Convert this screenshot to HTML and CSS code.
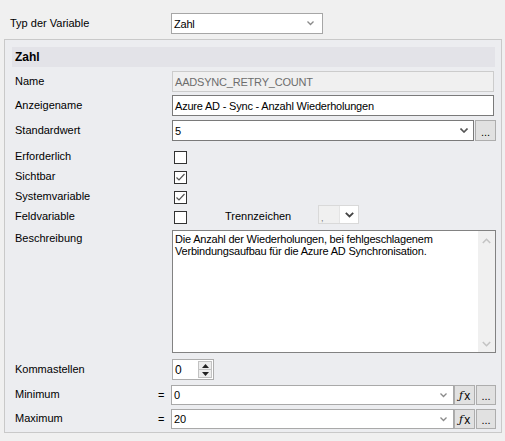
FILE: index.html
```html
<!DOCTYPE html>
<html>
<head>
<meta charset="utf-8">
<link rel="stylesheet" href="styles.css">
</head>
<body>
<div class="top">
  <span class="top-lbl">Typ der Variable</span>
  <div class="combo top-combo">
    <span class="val">Zahl</span>
    <svg class="chev" width="7" height="5" viewBox="0 0 7 5"><polyline points="0.5,0.5 3.5,3.5 6.5,0.5" fill="none" stroke="#8a8a8a" stroke-width="1.3"/></svg>
  </div>
</div>
<div class="group">
  <div class="band">Zahl</div>

  <div class="row h21 mt4">
    <span class="lbl">Name</span>
    <div class="field disabled">AADSYNC_RETRY_COUNT</div>
  </div>

  <div class="row h21 mt3">
    <span class="lbl">Anzeigename</span>
    <div class="field">Azure AD - Sync - Anzahl Wiederholungen</div>
  </div>

  <div class="row h21 mt4">
    <span class="lbl">Standardwert</span>
    <div class="combo std-combo">
      <span class="val">5</span>
      <svg class="chev" width="8" height="5" viewBox="0 0 8 5"><polyline points="0.5,0.5 4,4 7.5,0.5" fill="none" stroke="#555" stroke-width="1.6"/></svg>
    </div>
    <div class="btn dots">...</div>
  </div>

  <div class="row h20 mt6">
    <span class="lbl">Erforderlich</span>
    <span class="cb"></span>
  </div>
  <div class="row h20">
    <span class="lbl">Sichtbar</span>
    <span class="cb"><svg width="11" height="11" viewBox="0 0 11 11"><polyline points="1.5,5.5 4,8 9.5,2" fill="none" stroke="#555" stroke-width="1.2"/></svg></span>
  </div>
  <div class="row h20">
    <span class="lbl">Systemvariable</span>
    <span class="cb"><svg width="11" height="11" viewBox="0 0 11 11"><polyline points="1.5,5.5 4,8 9.5,2" fill="none" stroke="#555" stroke-width="1.2"/></svg></span>
  </div>
  <div class="row h20">
    <span class="lbl">Feldvariable</span>
    <span class="cb"></span>
    <span class="sep-lbl">Trennzeichen</span>
    <div class="sep-combo">
      <span class="sep-val">,</span>
      <span class="sep-btn"><svg width="9" height="6" viewBox="0 0 9 6"><polyline points="0.8,0.8 4.5,4.5 8.2,0.8" fill="none" stroke="#444" stroke-width="1.8"/></svg></span>
    </div>
  </div>

  <div class="row desc mt3">
    <span class="lbl lbl-top-al">Beschreibung</span>
    <div class="textarea">
      <div class="ta-text">Die Anzahl der Wiederholungen, bei fehlgeschlagenem Verbindungsaufbau für die Azure AD Synchronisation.</div>
      <div class="vscroll">
        <svg width="9" height="6" viewBox="0 0 9 6"><polyline points="0.8,5 4.5,1.3 8.2,5" fill="none" stroke="#c4c4c4" stroke-width="1.6"/></svg>
        <svg width="9" height="6" viewBox="0 0 9 6"><polyline points="0.8,1 4.5,4.7 8.2,1" fill="none" stroke="#c4c4c4" stroke-width="1.6"/></svg>
      </div>
    </div>
  </div>

  <div class="row h21 mt6">
    <span class="lbl">Kommastellen</span>
    <div class="spin">
      <span class="spin-val">0</span>
      <div class="spin-btns">
        <span class="sb"><svg width="7" height="4" viewBox="0 0 7 4"><polygon points="0,4 3.5,0 7,4" fill="#222"/></svg></span>
        <span class="sb"><svg width="7" height="4" viewBox="0 0 7 4"><polygon points="0,0 3.5,4 7,0" fill="#222"/></svg></span>
      </div>
    </div>
  </div>

  <div class="row h20 mt5">
    <span class="lbl lbl-eq">Minimum</span>
    <span class="eq">=</span>
    <div class="combo mm-combo">
      <span class="val">0</span>
      <svg class="chev" width="7" height="5" viewBox="0 0 7 5"><polyline points="0.5,0.5 3.5,3.5 6.5,0.5" fill="none" stroke="#8a8a8a" stroke-width="1.3"/></svg>
    </div>
    <div class="btn fx"><span class="fx-f">ƒ</span>x</div>
    <div class="btn dots2">...</div>
  </div>

  <div class="row h20 mt4">
    <span class="lbl lbl-eq">Maximum</span>
    <span class="eq">=</span>
    <div class="combo mm-combo">
      <span class="val">20</span>
      <svg class="chev" width="7" height="5" viewBox="0 0 7 5"><polyline points="0.5,0.5 3.5,3.5 6.5,0.5" fill="none" stroke="#8a8a8a" stroke-width="1.3"/></svg>
    </div>
    <div class="btn fx"><span class="fx-f">ƒ</span>x</div>
    <div class="btn dots2">...</div>
  </div>
</div>
</body>
</html>
```

FILE: styles.css
```css
html, body {
  margin: 0;
  padding: 0;
  background: #f0f0f0;
  font-family: "Liberation Sans", Arial, sans-serif;
  font-size: 11px;
  color: #000;
}

.top {
  display: flex;
  align-items: center;
  height: 21px;
  padding-top: 13px;
}
.top-lbl {
  width: 171px;
  flex: none;
  padding-left: 10px;
  box-sizing: border-box;
  margin-bottom: 2px;
}

.combo {
  display: flex;
  align-items: center;
  height: 100%;
  box-sizing: border-box;
  background: #fff;
  padding: 0 6px 0 2px;
  letter-spacing: -0.2px;
}
.combo .val { flex: 1; }
.top-combo {
  width: 152px;
  border: 1px solid #a6a6a6;
}
.top-combo .chev { margin-right: 2px; }

.group {
  margin: 5px 0 0 4px;
  width: 498px;
  box-sizing: border-box;
  border: 1px solid #c9c9c9;
  background: #ecedf0;
  padding: 7px 5px 3px 7px;
}
.band {
  height: 20px;
  width: 483px;
  background: #e3e3e8;
  font-weight: bold;
  padding-left: 3px;
  box-sizing: border-box;
  display: flex;
  align-items: center;
  font-size: 12px;
}

.row {
  display: flex;
  align-items: center;
}
.h21 { height: 21px; }
.h20 { height: 20px; }
.mt3 { margin-top: 3px; }
.mt4 { margin-top: 4px; }
.mt5 { margin-top: 5px; }
.mt6 { margin-top: 6px; }

.lbl {
  width: 160px;
  flex: none;
  padding-left: 3px;
  box-sizing: border-box;
  margin-bottom: 2px;
}
.lbl-eq { width: 146px; }
.eq {
  width: 13px;
  flex: none;
  margin-bottom: 1px;
}

.field {
  width: 322px;
  height: 100%;
  box-sizing: border-box;
  border: 1px solid #7a7a7a;
  background: #fff;
  display: flex;
  align-items: center;
  padding-left: 2px;
  letter-spacing: -0.2px;
}
.field.disabled {
  background: #f0f0f0;
  border-color: #cccccc;
  color: #6d6d6d;
}

.std-combo {
  width: 302px;
  border: 1px solid #7a7a7a;
  padding-right: 5px;
}
.btn {
  height: 100%;
  box-sizing: border-box;
  background: #e1e1e1;
  border: 1px solid #adadad;
  display: flex;
  align-items: center;
  justify-content: center;
  font-size: 11px;
}
.dots {
  width: 21px;
  margin-left: 1px;
  padding-top: 2px;
}

.cb {
  width: 13px;
  height: 13px;
  box-sizing: border-box;
  border: 1px solid #333;
  background: #fff;
  margin-left: 2px;
  display: flex;
  align-items: center;
  justify-content: center;
}

.sep-lbl {
  margin-left: 38px;
  width: 93px;
  margin-bottom: 2px;
}
.sep-combo {
  width: 41px;
  height: 19px;
  box-sizing: border-box;
  border: 1px solid #d9d9d9;
  display: flex;
  margin-bottom: 5px;
  background: #fff;
}
.sep-val {
  width: 21px;
  background: #f0f0f0;
  border-right: 1px solid #e4e4e4;
  font-size: 9px;
  color: #777;
  display: flex;
  align-items: flex-end;
  padding-left: 2px;
  box-sizing: border-box;
}
.sep-btn {
  flex: 1;
  display: flex;
  align-items: center;
  justify-content: center;
}

.desc {
  height: 123px;
  align-items: flex-start;
}
.lbl-top-al { padding-top: 2px; }
.textarea {
  width: 324px;
  height: 123px;
  box-sizing: border-box;
  border: 1px solid #828282;
  background: #fff;
  display: flex;
}
.ta-text {
  flex: 1;
  padding: 2px 2px 0 2px;
  line-height: 12px;
  letter-spacing: -0.2px;
}
.vscroll {
  width: 17px;
  background: #f0f0f0;
  display: flex;
  flex-direction: column;
  justify-content: space-between;
  align-items: center;
  padding: 7px 0 5px;
  box-sizing: border-box;
}

.spin {
  width: 42px;
  height: 21px;
  box-sizing: border-box;
  border: 1px solid #adadad;
  background: #fff;
  display: flex;
  align-items: center;
  padding: 1px 1px 1px 2px;
}
.spin-val { flex: 1; font-size: 12px; }
.spin-btns {
  width: 14px;
  height: 100%;
  display: flex;
  flex-direction: column;
  border: 1px solid #c2c2c2;
  box-sizing: border-box;
}
.sb {
  flex: 1;
  display: flex;
  align-items: center;
  justify-content: center;
  background: #ededed;
}
.sb + .sb { border-top: 1px solid #c2c2c2; }

.mm-combo {
  width: 284px;
  border: 1px solid #a9a9a9;
  padding-right: 6px;
}
.fx {
  width: 21px;
  font-size: 12px;
  padding-top: 1px;
}
.fx-f {
  font-family: "DejaVu Serif", serif;
  font-style: italic;
  font-size: 11px;
  margin-right: 1px;
}
.dots2 {
  width: 20px;
  margin-left: 1px;
  padding-top: 2px;
}
```
